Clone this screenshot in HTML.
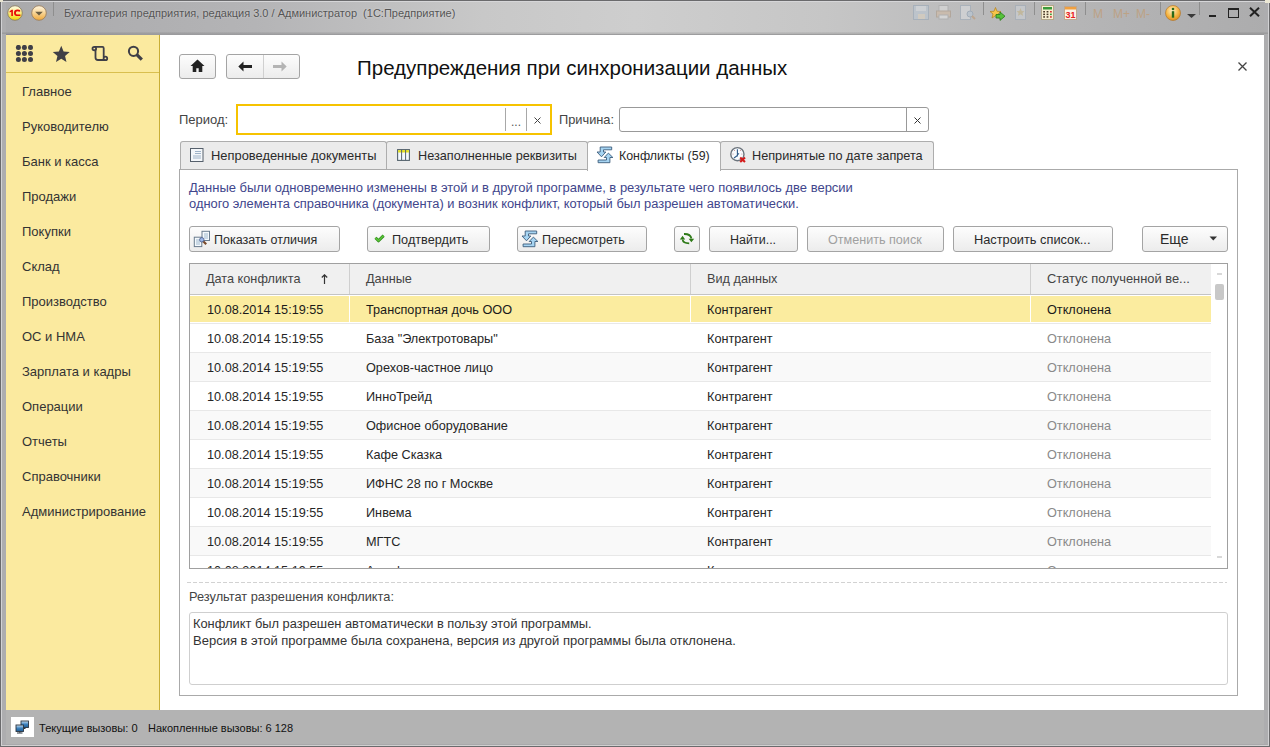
<!DOCTYPE html>
<html><head><meta charset="utf-8">
<style>
*{box-sizing:border-box;margin:0;padding:0}
html,body{width:1270px;height:747px;overflow:hidden;background:#b4b4b4;font-family:"Liberation Sans",sans-serif;}
.a{position:absolute}
.t{position:absolute;white-space:nowrap;line-height:1;}
#frame{left:0;top:0;width:1270px;height:747px;border:1px solid #6e6e70;}
#titlebar{left:1px;top:1px;width:1268px;height:33px;background:linear-gradient(to right,#a9a9ab 0%,#b4b4b6 20%,#c8c8c8 38%,#cecece 50%,#c6c6c6 65%,#b8b8b9 80%,#acacad 100%);}
#sidebar{left:6px;top:35px;width:154px;height:675px;background:#fbea9f;border-right:1px solid #c9ae36;}
#main{left:160px;top:35px;width:1104px;height:675px;background:#fff;}
#status{left:6px;top:710px;width:1258px;height:34px;background:#b3b3b3;}
.menu{left:22px;font-size:13px;color:#333;}
.btn{position:absolute;height:26px;border:1px solid #a4a4a4;border-radius:3px;background:linear-gradient(#fdfdfd,#ececec);}
.tab{position:absolute;top:141px;height:28px;border:1px solid #adadad;border-bottom:none;border-radius:3px 3px 0 0;background:#ebebeb;}
.bt{font-size:12.6px;color:#2a2a2a;}
.row{position:absolute;left:190px;width:1021px;height:29px;border-bottom:1px solid #e6e6e6;}
.cell{position:absolute;font-size:12.7px;color:#262626;top:9px;white-space:nowrap;line-height:1}
</style></head><body>
<div class="a" id="frame"></div>
<div class="a" id="titlebar"></div>
<div class="a" style="left:0;top:0;width:1270px;height:1px;background:#6a6a6c"></div>
<div class="a" style="left:1px;top:1px;width:1268px;height:1px;background:#d6d6d8"></div>
<div class="a" style="left:0;top:0;width:1px;height:747px;background:#6a6a6c"></div>
<div class="a" style="left:1px;top:1px;width:1px;height:745px;background:#d2d2d4"></div>
<div class="a" style="left:1269px;top:0;width:1px;height:747px;background:#6a6a6c"></div>
<div class="a" style="left:1268px;top:1px;width:1px;height:745px;background:#d2d2d4"></div>
<div class="a" style="left:2px;top:2px;width:4px;height:744px;background:#adadaf"></div>
<div class="a" style="left:1264px;top:2px;width:4px;height:744px;background:#adadaf"></div>
<div class="a" style="left:2px;top:32px;width:1266px;height:2px;background:linear-gradient(rgba(0,0,0,0.04),rgba(0,0,0,0.12))"></div>
<div class="a" style="left:6px;top:34px;width:1258px;height:1px;background:linear-gradient(to right,#8a8794,#9b9b9e 10%,#9e9e9e 90%,#98989a)"></div>

<!-- title bar content -->
<div class="a" style="left:0;top:0;width:3px;height:2px;background:#e8e4d0"></div>
<div class="a" style="left:1265px;top:0;width:5px;height:3px;background:#ece8d4"></div>
<svg class="a" style="left:7px;top:5px" width="16" height="16" viewBox="0 0 16 16"><defs><linearGradient id="lg1" x1="0" y1="0" x2="0" y2="1"><stop offset="0" stop-color="#fffbe8"/><stop offset="0.45" stop-color="#fbf08a"/><stop offset="1" stop-color="#f2d400"/></linearGradient></defs><circle cx="8" cy="8" r="7.3" fill="url(#lg1)" stroke="#8c7e62" stroke-width="0.9"/><path d="M2.6 6.2 L4.6 4.8 H5.9 V11 H4.3 V6.8 L2.6 7.6 Z" fill="#e80808"/><path d="M13.2 6.4 V5.2 Q12.4 4.6 10.6 4.6 Q7 4.6 7 7.9 Q7 11 10.6 11 H13.4 V9.4 H10.6 Q8.8 9.4 8.8 7.9 Q8.8 6.2 10.6 6.2 Q11.8 6.2 12 6.8 Z" fill="#e80808"/></svg>
<svg class="a" style="left:31px;top:5px" width="16" height="16" viewBox="0 0 16 16"><defs><linearGradient id="lg2" x1="0" y1="0" x2="0" y2="1"><stop offset="0" stop-color="#fff6e0"/><stop offset="0.5" stop-color="#f8d494"/><stop offset="1" stop-color="#f0a838"/></linearGradient></defs><circle cx="8" cy="8" r="7.3" fill="url(#lg2)" stroke="#9c8060" stroke-width="0.9"/><path d="M4.2 6.8 H11.8 L8 10.6 Z" fill="#6a5e44"/></svg>
<div class="a" style="left:53px;top:2px;width:1px;height:14px;background:#8e8e8e"></div>
<div class="t" style="left:64px;top:8px;font-size:11px;color:#555;text-shadow:0 0 2px rgba(255,255,255,0.5);">Бухгалтерия предприятия, редакция 3.0 / Администратор&nbsp; (1С:Предприятие)</div>


<!-- title bar right icons -->
<svg class="a" style="left:913px;top:5px" width="17" height="15" viewBox="0 0 17 15" opacity="0.35"><rect x="0.5" y="0.5" width="15" height="14" fill="#b8cde0" stroke="#7b95b0"/><rect x="3" y="1" width="10" height="5" fill="#e8f0f8"/><rect x="5" y="9" width="7" height="5" fill="#f0e0c0"/></svg>
<svg class="a" style="left:936px;top:5px" width="15" height="15" viewBox="0 0 15 15" opacity="0.35"><rect x="3" y="0.5" width="9" height="6" fill="#f4f4f4" stroke="#9a9a9a"/><rect x="0.5" y="6" width="14" height="6" fill="#e0b890" stroke="#a08060"/><rect x="3" y="10" width="9" height="4" fill="#fff" stroke="#9a9a9a"/></svg>
<svg class="a" style="left:960px;top:5px" width="16" height="15" viewBox="0 0 16 15" opacity="0.35"><rect x="0.5" y="0.5" width="10" height="14" fill="#f0f4f8" stroke="#8aa0b8"/><circle cx="10" cy="9" r="3" fill="#b8d0e8" stroke="#7090b0"/><path d="M12 11 L15 14" stroke="#c08040" stroke-width="2"/></svg>
<div class="a" style="left:983px;top:2px;width:1px;height:13px;background:#8e8e8e"></div>
<svg class="a" style="left:990px;top:7px" width="16" height="14" viewBox="0 0 16 14"><path d="M5.5 0.5 L7 4.3 L11 4.5 L8 7 L9 11 L5.5 8.7 L2 11 L3 7 L0 4.5 L4 4.3 Z" fill="#f6c54a" stroke="#b08020" stroke-width="0.7"/><path d="M6 7.5 H10 V5 L15 9.2 L10 13.4 V11 H6 Z" fill="#56c23a" stroke="#2a7a1a" stroke-width="0.8"/></svg>
<svg class="a" style="left:1015px;top:5px" width="11" height="15" viewBox="0 0 11 15" opacity="0.3"><rect x="0.5" y="0.5" width="10" height="14" fill="#e4ecf4" stroke="#8aa0b8"/><path d="M5.5 3 L6.7 6 L9.5 6.2 L7.4 8 L8.1 11 L5.5 9.3 L2.9 11 L3.6 8 L1.5 6.2 L4.3 6 Z" fill="#d8b860"/></svg>
<div class="a" style="left:1034px;top:2px;width:1px;height:13px;background:#8e8e8e"></div>
<svg class="a" style="left:1041px;top:5px" width="13" height="15" viewBox="0 0 13 15"><rect x="0.5" y="0.5" width="12" height="14" fill="#f8efd2" stroke="#b4a88a"/><rect x="2" y="2" width="9" height="2.5" fill="#3a9a3a"/><g fill="#4a3a2a"><rect x="2.2" y="6" width="1.8" height="1.5"/><rect x="5.6" y="6" width="1.8" height="1.5"/><rect x="2.2" y="8.6" width="1.8" height="1.5"/><rect x="5.6" y="8.6" width="1.8" height="1.5"/><rect x="2.2" y="11.2" width="1.8" height="1.5"/><rect x="5.6" y="11.2" width="1.8" height="1.5"/></g><g fill="#d83030"><rect x="9" y="6" width="1.8" height="1.5"/><rect x="9" y="11.2" width="1.8" height="1.5"/></g><rect x="9" y="8.6" width="1.8" height="1.5" fill="#3a9a3a"/></svg>
<svg class="a" style="left:1064px;top:5px" width="13" height="15" viewBox="0 0 13 15"><rect x="0.5" y="1.5" width="12" height="13" fill="#fbf3e6" stroke="#c0a890"/><rect x="1" y="2" width="11" height="2.5" fill="#f0a040"/><text x="1.6" y="13" font-family="Liberation Sans" font-size="9" font-weight="bold" fill="#e82020">31</text></svg>
<div class="a" style="left:1085px;top:2px;width:1px;height:13px;background:#8e8e8e"></div>
<div class="t" style="left:1093px;top:8px;font-size:12px;color:#bda285">M</div>
<div class="t" style="left:1113px;top:8px;font-size:12px;color:#bda285">M+</div>
<div class="t" style="left:1136px;top:8px;font-size:12px;color:#bda285">M-</div>
<div class="a" style="left:1160px;top:2px;width:1px;height:13px;background:#8e8e8e"></div>
<svg class="a" style="left:1165px;top:5px" width="16" height="16" viewBox="0 0 16 16"><defs><radialGradient id="ig" cx="0.45" cy="0.35" r="0.7"><stop offset="0" stop-color="#fff2c8"/><stop offset="0.6" stop-color="#f6b440"/><stop offset="1" stop-color="#d88a20"/></radialGradient></defs><circle cx="8" cy="8" r="7.5" fill="url(#ig)" stroke="#b07020" stroke-width="0.6"/><circle cx="8" cy="4" r="1.3" fill="#2a6a1a"/><rect x="6.8" y="6.2" width="2.4" height="6.5" fill="#2a6a1a"/></svg>
<svg class="a" style="left:1187px;top:14px" width="9" height="4" viewBox="0 0 9 4"><path d="M0 0 H9 L4.5 4 Z" fill="#3a3a3a"/></svg>
<div class="a" style="left:1199px;top:2px;width:1px;height:13px;background:#8e8e8e"></div>
<div class="a" style="left:1209px;top:15px;width:7px;height:2px;background:#222"></div>
<div class="a" style="left:1228px;top:8px;width:11px;height:10px;border:1px solid #222;border-top-width:2px"></div>
<svg class="a" style="left:1249px;top:7px" width="11" height="10" viewBox="0 0 11 10"><path d="M1 0.8 L10 9.2 M10 0.8 L1 9.2" stroke="#222" stroke-width="2"/></svg>

<!-- sidebar -->
<div class="a" id="sidebar"></div>
<div class="a" style="left:6px;top:72px;width:153px;height:1px;background:#d9bf4f"></div>
<svg class="a" style="left:15px;top:45px" width="18" height="18" viewBox="0 0 18 18" fill="#3f3f47"><circle cx="3.4" cy="2.4" r="2.5"/><circle cx="9.4" cy="2.4" r="2.5"/><circle cx="15.5" cy="2.4" r="2.5"/><circle cx="3.4" cy="8.5" r="2.5"/><circle cx="9.4" cy="8.5" r="2.5"/><circle cx="15.5" cy="8.5" r="2.5"/><circle cx="3.4" cy="14.6" r="2.5"/><circle cx="9.4" cy="14.6" r="2.5"/><circle cx="15.5" cy="14.6" r="2.5"/></svg>
<svg class="a" style="left:52px;top:45px" width="19" height="18" viewBox="0 0 19 18"><path d="M9.25 0.80 L11.60 6.46 L17.71 6.95 L13.05 10.94 L14.48 16.90 L9.25 13.70 L4.02 16.90 L5.45 10.94 L0.79 6.95 L6.90 6.46 Z" fill="#404046"/></svg>
<svg class="a" style="left:91px;top:45px" width="18" height="17" viewBox="0 0 18 17" fill="none" stroke="#3f3f47" stroke-width="1.8"><path d="M4.5 4 V12.5 Q4.5 15 7 15 H14.5"/><path d="M3.5 1.8 H11.5 Q12.7 1.8 12.7 3.2 V12.3"/><circle cx="3.3" cy="3.6" r="1.8"/><circle cx="14.4" cy="13.4" r="1.8"/></svg>
<svg class="a" style="left:126px;top:45px" width="18" height="17" viewBox="0 0 18 17"><circle cx="7.5" cy="6.3" r="4.6" fill="none" stroke="#3f3f47" stroke-width="2"/><path d="M10.8 9.6 L15.8 14.6" stroke="#3f3f47" stroke-width="3.2"/></svg>
<div class="t menu" style="top:85px">Главное</div>
<div class="t menu" style="top:120px">Руководителю</div>
<div class="t menu" style="top:155px">Банк и касса</div>
<div class="t menu" style="top:190px">Продажи</div>
<div class="t menu" style="top:225px">Покупки</div>
<div class="t menu" style="top:260px">Склад</div>
<div class="t menu" style="top:295px">Производство</div>
<div class="t menu" style="top:330px">ОС и НМА</div>
<div class="t menu" style="top:365px">Зарплата и кадры</div>
<div class="t menu" style="top:400px">Операции</div>
<div class="t menu" style="top:435px">Отчеты</div>
<div class="t menu" style="top:470px">Справочники</div>
<div class="t menu" style="top:505px">Администрирование</div>

<!-- main -->
<div class="a" id="main"></div>
<!-- nav buttons -->
<div class="btn" style="left:179px;top:54px;width:37px;height:25px;"></div>
<svg class="a" style="left:190px;top:59px" width="15" height="14" viewBox="0 0 15 14"><path d="M7.5 0.5 L14.5 7 H12.3 V13 H8.7 V9.3 H6.3 V13 H2.7 V7 H0.5 Z" fill="#222"/></svg>
<div class="btn" style="left:226px;top:54px;width:74px;height:25px;"></div>
<div class="a" style="left:263px;top:55px;width:1px;height:23px;background:#d0d0d0"></div>
<svg class="a" style="left:238px;top:61px" width="15" height="12" viewBox="0 0 15 12"><path d="M0.3 5.5 L5.5 0.5 V4 H14 V7 H5.5 V10.6 Z" fill="#222"/></svg>
<svg class="a" style="left:272px;top:61px" width="15" height="12" viewBox="0 0 15 12"><path d="M14.7 5.5 L9.5 0.5 V4 H1 V7 H9.5 V10.6 Z" fill="#b4b4b4"/></svg>
<div class="t" style="left:357px;top:57.5px;font-size:20.5px;color:#111;">Предупреждения при синхронизации данных</div>
<svg class="a" style="left:1238px;top:62px" width="9" height="9" viewBox="0 0 9 9"><path d="M0.5 0.5 L8.5 8.5 M8.5 0.5 L0.5 8.5" stroke="#444" stroke-width="1.3"/></svg>

<!-- period -->
<div class="t" style="left:179px;top:113px;font-size:13px;color:#444">Период:</div>
<div class="a" style="left:236px;top:104px;width:316px;height:31px;border:2px solid #f6c300;background:#fff"></div>
<div class="a" style="left:505px;top:108px;width:1px;height:23px;background:#a8a8a8"></div>
<div class="a" style="left:526px;top:108px;width:1px;height:23px;background:#a8a8a8"></div>
<div class="t" style="left:511px;top:116px;font-size:12px;color:#555">...</div>
<svg class="a" style="left:534px;top:117px" width="7" height="7" viewBox="0 0 7 7"><path d="M0.5 0.5 L6.5 6.5 M6.5 0.5 L0.5 6.5" stroke="#444" stroke-width="1"/></svg>
<div class="t" style="left:559px;top:114px;font-size:12.8px;color:#444">Причина:</div>
<div class="a" style="left:619px;top:107px;width:310px;height:25px;border:1px solid #999;border-radius:3px;background:#fff"></div>
<div class="a" style="left:906px;top:108px;width:1px;height:23px;background:#999"></div>
<svg class="a" style="left:914px;top:117px" width="7" height="7" viewBox="0 0 7 7"><path d="M0.5 0.5 L6.5 6.5 M6.5 0.5 L0.5 6.5" stroke="#333" stroke-width="1"/></svg>

<!-- tabs -->
<div class="a" style="left:179px;top:169px;width:1059px;height:527px;border:1px solid #aaaaaa;background:#fff"></div>
<div class="tab" style="left:180px;width:207px"></div>
<div class="tab" style="left:386px;width:202px"></div>
<div class="tab" style="left:587px;width:134px;height:30px;background:#fff"></div>
<div class="tab" style="left:720px;width:214px"></div>
<svg class="a" style="left:190px;top:148px" width="14" height="14" viewBox="0 0 14 14"><rect x="0.5" y="0.5" width="12.5" height="13" fill="#f4f7fa" stroke="#56606c"/><path d="M5 3.5h6M5 5.5h6M3 8h8M3 10h8" stroke="#9fb3c8" stroke-width="1"/></svg>
<div class="t bt" style="left:211px;top:150px;font-size:12.9px">Непроведенные документы</div>
<svg class="a" style="left:397px;top:149px" width="13" height="12" viewBox="0 0 13 12"><rect x="0.6" y="0.6" width="11.8" height="10.8" fill="#f4faff" stroke="#56646e" stroke-width="1.1"/><rect x="1.1" y="1.1" width="10.8" height="2.4" fill="#e4e020"/><path d="M4.6 0.6v10.8M8.6 0.6v10.8" stroke="#56646e" stroke-width="1"/></svg>
<div class="t bt" style="left:418px;top:150px;font-size:12.7px">Незаполненные реквизиты</div>
<svg class="a" style="left:596px;top:145px" width="18" height="19" viewBox="0 0 18 19"><path d="M15.7 2 H4.2 V7 H1 L5.5 11.8 L9.8 7 H7.5 V4.8 H15.7 Z" fill="#a6d4f2" stroke="#3c5c7a" stroke-width="0.9" stroke-linejoin="round"/><path d="M2.1 17.7 H13.9 V12.5 H16.9 L12.4 8.1 L8.2 12.5 H10.5 V15 H2.1 Z" fill="#a6d4f2" stroke="#3c5c7a" stroke-width="0.9" stroke-linejoin="round"/></svg>
<div class="t bt" style="left:619px;top:150px;font-size:12.4px">Конфликты (59)</div>
<svg class="a" style="left:729px;top:146px" width="18" height="18" viewBox="0 0 18 18"><circle cx="8.4" cy="8.2" r="6.6" fill="#f8fbfe" stroke="#6c747c" stroke-width="1.4"/><path d="M8.4 3.2 V10.4 M8.4 8.8 L10 7.4 M8.4 9.5 L5 12" stroke="#2e5a88" stroke-width="1.1" fill="none"/><g fill="#c08080"><circle cx="5.5" cy="4.5" r="0.5"/><circle cx="11.4" cy="4.5" r="0.5"/><circle cx="4" cy="8" r="0.5"/><circle cx="12.9" cy="8" r="0.5"/></g><path d="M11.2 11.4 L16 16 M16 11.4 L11.2 16" stroke="#d41a1a" stroke-width="2.1"/></svg>
<div class="t bt" style="left:752px;top:150px;font-size:12.7px">Непринятые по дате запрета</div>

<!-- info -->
<div class="t" style="left:189px;top:181px;font-size:13px;color:#41468c">Данные были одновременно изменены в этой и в другой программе, в результате чего появилось две версии</div>
<div class="t" style="left:189px;top:198px;font-size:12.89px;color:#41468c">одного элемента справочника (документа) и возник конфликт, который был разрешен автоматически.</div>

<!-- toolbar -->
<div class="btn" style="left:189px;top:226px;width:151px"></div>
<svg class="a" style="left:193px;top:230px" width="18" height="18" viewBox="0 0 18 18"><rect x="9" y="1.3" width="7.5" height="9.2" fill="#f4f9fd" stroke="#6a7c8e" stroke-width="1"/><path d="M11 4h4M11 6h4M11 8h4" stroke="#8aa8c0" stroke-width="0.8"/><rect x="1.3" y="7.2" width="7.5" height="9.4" fill="#f4f9fd" stroke="#6a7c8e" stroke-width="1"/><path d="M3 10h4M3 12h4M3 14h4" stroke="#8aa8c0" stroke-width="0.8"/><path d="M9.5 10.5 L13.2 14.2" stroke="#7a4a2a" stroke-width="2.2"/><circle cx="8.8" cy="9.8" r="2.2" fill="#9cb8e8" stroke="#4a5a8a" stroke-width="0.8"/></svg>
<div class="t bt" style="left:214px;top:233.5px;font-size:12.5px">Показать отличия</div>
<div class="btn" style="left:367px;top:226px;width:123px"></div>
<svg class="a" style="left:374px;top:234px" width="11" height="9" viewBox="0 0 11 9"><path d="M1.5 3.8 L4.5 6.8 L9.6 1.6" stroke="#2f8a1c" stroke-width="3" fill="none" stroke-linejoin="round"/><path d="M1.5 3.8 L4.5 6.8 L9.6 1.6" stroke="#5cc83a" stroke-width="1.4" fill="none" stroke-linejoin="round"/></svg>
<div class="t bt" style="left:392px;top:233.5px;font-size:12.7px">Подтвердить</div>
<div class="btn" style="left:517px;top:226px;width:130px"></div>
<svg class="a" style="left:521px;top:229px" width="18" height="19" viewBox="0 0 18 19"><path d="M15.7 2 H4.2 V7 H1 L5.5 11.8 L9.8 7 H7.5 V4.8 H15.7 Z" fill="#a6d4f2" stroke="#3c5c7a" stroke-width="0.9" stroke-linejoin="round"/><path d="M2.1 17.7 H13.9 V12.5 H16.9 L12.4 8.1 L8.2 12.5 H10.5 V15 H2.1 Z" fill="#a6d4f2" stroke="#3c5c7a" stroke-width="0.9" stroke-linejoin="round"/></svg>
<div class="t bt" style="left:542px;top:233.5px;font-size:12.5px">Пересмотреть</div>
<div class="btn" style="left:674px;top:226px;width:26px"></div>
<svg class="a" style="left:679px;top:232px" width="16" height="13" viewBox="0 0 16 13"><path d="M3.6 7.5 Q4 11.3 10.2 11.3" stroke="#2e7a18" stroke-width="1.8" fill="none"/><path d="M0.8 7.6 L3.6 3.8 L6.2 7.6 Z" fill="#2e7a18"/><path d="M5 2 Q11.5 1.8 12.4 6.5" stroke="#2e7a18" stroke-width="1.8" fill="none"/><path d="M9.6 6.8 L12.4 10.2 L15.2 6.8 Z" fill="#2e7a18"/></svg>
<div class="btn" style="left:709px;top:226px;width:89px"></div>
<div class="t bt" style="left:730px;top:233.5px;font-size:12.5px">Найти...</div>
<div class="btn" style="left:807px;top:226px;width:137px"></div>
<div class="t bt" style="left:828px;top:233.5px;font-size:12.6px;color:#a0a0a0">Отменить поиск</div>
<div class="btn" style="left:953px;top:226px;width:160px"></div>
<div class="t bt" style="left:974px;top:233.5px;font-size:12.8px">Настроить список...</div>
<div class="btn" style="left:1142px;top:226px;width:86px"></div>
<div class="t bt" style="left:1160px;top:232px;font-size:14px">Еще</div>
<svg class="a" style="left:1209px;top:236px" width="9" height="5" viewBox="0 0 9 5"><path d="M0.5 0.5 H8 L4.25 4.5 Z" fill="#333"/></svg>

<!-- table -->
<div class="a" style="left:189px;top:263px;width:1039px;height:306px;border:1px solid #a0a0a0;background:#fff;overflow:hidden">
</div>
<div class="a" style="left:190px;top:264px;width:1021px;height:30px;background:#f0f0f0"></div>
<div class="a" style="left:190px;top:294px;width:1021px;height:1px;background:#c4c4c4"></div>
<div class="a" style="left:349px;top:264px;width:1px;height:30px;background:#cfcfcf"></div>
<div class="a" style="left:690px;top:264px;width:1px;height:30px;background:#cfcfcf"></div>
<div class="a" style="left:1030px;top:264px;width:1px;height:30px;background:#cfcfcf"></div>
<div class="t" style="left:206px;top:273px;font-size:12.7px;color:#444">Дата конфликта</div>
<svg class="a" style="left:321px;top:274px" width="7" height="10" viewBox="0 0 7 10"><path d="M3.5 1 V10 M0.8 3.5 L3.5 0.8 L6.2 3.5" stroke="#333" stroke-width="1.2" fill="none"/></svg>
<div class="t" style="left:366px;top:273px;font-size:12.7px;color:#444">Данные</div>
<div class="t" style="left:707px;top:273px;font-size:12.7px;color:#444">Вид данных</div>
<div class="t" style="left:1047px;top:273px;font-size:12.9px;color:#444">Статус полученной ве...</div>
<div id="rows"></div>
<div class="a" style="left:190px;top:296px;width:1021px;height:26px;background:#fbec9f"></div>
<div class="a" style="left:190px;top:323px;width:1021px;height:1px;background:#e8e8e8"></div>
<div class="a" style="left:349px;top:295px;width:1px;height:28px;background:#fff"></div>
<div class="a" style="left:690px;top:295px;width:1px;height:28px;background:#fff"></div>
<div class="a" style="left:1030px;top:295px;width:1px;height:28px;background:#fff"></div>
<div class="t cell" style="left:207px;top:304px;color:#1a1a1a">10.08.2014 15:19:55</div>
<div class="t cell" style="left:366px;top:304px;color:#1a1a1a">Транспортная дочь ООО</div>
<div class="t cell" style="left:707px;top:304px;color:#1a1a1a">Контрагент</div>
<div class="t cell" style="left:1047px;top:304px;color:#1a1a1a">Отклонена</div>
<div class="a" style="left:190px;top:324px;width:1021px;height:28px;background:#ffffff"></div>
<div class="a" style="left:190px;top:352px;width:1021px;height:1px;background:#e8e8e8"></div>
<div class="t cell" style="left:207px;top:333px;color:#262626">10.08.2014 15:19:55</div>
<div class="t cell" style="left:366px;top:333px;color:#262626">База &quot;Электротовары&quot;</div>
<div class="t cell" style="left:707px;top:333px;color:#262626">Контрагент</div>
<div class="t cell" style="left:1047px;top:333px;color:#8a8a8a">Отклонена</div>
<div class="a" style="left:190px;top:353px;width:1021px;height:28px;background:#f9f9f9"></div>
<div class="a" style="left:190px;top:381px;width:1021px;height:1px;background:#e8e8e8"></div>
<div class="t cell" style="left:207px;top:362px;color:#262626">10.08.2014 15:19:55</div>
<div class="t cell" style="left:366px;top:362px;color:#262626">Орехов-частное лицо</div>
<div class="t cell" style="left:707px;top:362px;color:#262626">Контрагент</div>
<div class="t cell" style="left:1047px;top:362px;color:#8a8a8a">Отклонена</div>
<div class="a" style="left:190px;top:382px;width:1021px;height:28px;background:#ffffff"></div>
<div class="a" style="left:190px;top:410px;width:1021px;height:1px;background:#e8e8e8"></div>
<div class="t cell" style="left:207px;top:391px;color:#262626">10.08.2014 15:19:55</div>
<div class="t cell" style="left:366px;top:391px;color:#262626">ИнноТрейд</div>
<div class="t cell" style="left:707px;top:391px;color:#262626">Контрагент</div>
<div class="t cell" style="left:1047px;top:391px;color:#8a8a8a">Отклонена</div>
<div class="a" style="left:190px;top:411px;width:1021px;height:28px;background:#f9f9f9"></div>
<div class="a" style="left:190px;top:439px;width:1021px;height:1px;background:#e8e8e8"></div>
<div class="t cell" style="left:207px;top:420px;color:#262626">10.08.2014 15:19:55</div>
<div class="t cell" style="left:366px;top:420px;color:#262626">Офисное оборудование</div>
<div class="t cell" style="left:707px;top:420px;color:#262626">Контрагент</div>
<div class="t cell" style="left:1047px;top:420px;color:#8a8a8a">Отклонена</div>
<div class="a" style="left:190px;top:440px;width:1021px;height:28px;background:#ffffff"></div>
<div class="a" style="left:190px;top:468px;width:1021px;height:1px;background:#e8e8e8"></div>
<div class="t cell" style="left:207px;top:449px;color:#262626">10.08.2014 15:19:55</div>
<div class="t cell" style="left:366px;top:449px;color:#262626">Кафе Сказка</div>
<div class="t cell" style="left:707px;top:449px;color:#262626">Контрагент</div>
<div class="t cell" style="left:1047px;top:449px;color:#8a8a8a">Отклонена</div>
<div class="a" style="left:190px;top:469px;width:1021px;height:28px;background:#f9f9f9"></div>
<div class="a" style="left:190px;top:497px;width:1021px;height:1px;background:#e8e8e8"></div>
<div class="t cell" style="left:207px;top:478px;color:#262626">10.08.2014 15:19:55</div>
<div class="t cell" style="left:366px;top:478px;color:#262626">ИФНС 28 по г Москве</div>
<div class="t cell" style="left:707px;top:478px;color:#262626">Контрагент</div>
<div class="t cell" style="left:1047px;top:478px;color:#8a8a8a">Отклонена</div>
<div class="a" style="left:190px;top:498px;width:1021px;height:28px;background:#ffffff"></div>
<div class="a" style="left:190px;top:526px;width:1021px;height:1px;background:#e8e8e8"></div>
<div class="t cell" style="left:207px;top:507px;color:#262626">10.08.2014 15:19:55</div>
<div class="t cell" style="left:366px;top:507px;color:#262626">Инвема</div>
<div class="t cell" style="left:707px;top:507px;color:#262626">Контрагент</div>
<div class="t cell" style="left:1047px;top:507px;color:#8a8a8a">Отклонена</div>
<div class="a" style="left:190px;top:527px;width:1021px;height:28px;background:#f9f9f9"></div>
<div class="a" style="left:190px;top:555px;width:1021px;height:1px;background:#e8e8e8"></div>
<div class="t cell" style="left:207px;top:536px;color:#262626">10.08.2014 15:19:55</div>
<div class="t cell" style="left:366px;top:536px;color:#262626">МГТС</div>
<div class="t cell" style="left:707px;top:536px;color:#262626">Контрагент</div>
<div class="t cell" style="left:1047px;top:536px;color:#8a8a8a">Отклонена</div>
<div class="a" style="left:190px;top:556px;width:1021px;height:12px;background:#ffffff"></div>
<div class="t cell" style="left:207px;top:565px;color:#262626">10.08.2014 15:19:55</div>
<div class="t cell" style="left:366px;top:565px;color:#262626">Агрофирма</div>
<div class="t cell" style="left:707px;top:565px;color:#262626">Контрагент</div>
<div class="t cell" style="left:1047px;top:565px;color:#8a8a8a">Отклонена</div>
<div class="a" style="left:189px;top:568px;width:1039px;height:1px;background:#a0a0a0"></div>
<div class="a" style="left:180px;top:569px;width:1057px;height:12px;background:#fff"></div>
<div class="a" style="left:1215px;top:284px;width:9px;height:16px;background:#c8c8c8;border-radius:2px"></div>
<div class="a" style="left:1217px;top:273px;width:5px;height:2px;background:#d8d8d8"></div>
<div class="a" style="left:1217px;top:556px;width:5px;height:2px;background:#d8d8d8"></div>

<!-- result -->
<div class="a" style="left:187px;top:582px;width:1040px;height:1px;background-image:linear-gradient(to right,#d2d2d2 4px,transparent 4px);background-size:6px 1px"></div>
<div class="t" style="left:189px;top:591px;font-size:12.8px;color:#444">Результат разрешения конфликта:</div>
<div class="a" style="left:189px;top:612px;width:1039px;height:73px;border:1px solid #cfcfcf;border-radius:3px;background:#fff"></div>
<div class="t" style="left:193px;top:618px;font-size:12.85px;color:#333">Конфликт был разрешен автоматически в пользу этой программы.</div>
<div class="t" style="left:193px;top:634px;font-size:13px;color:#333">Версия в этой программе была сохранена, версия из другой программы была отклонена.</div>

<!-- status bar -->
<div class="a" id="status"></div>
<div class="a" style="left:2px;top:744px;width:1266px;height:1px;background:#a9a9ab"></div>
<div class="a" style="left:1px;top:745px;width:1268px;height:1px;background:#d0d0d0"></div>
<div class="a" style="left:0;top:746px;width:1270px;height:1px;background:#6a6a6c"></div>
<div class="a" style="left:11px;top:717px;width:23px;height:20px;background:#fff"></div>
<svg class="a" style="left:15px;top:720px" width="15" height="15" viewBox="0 0 15 15"><defs><linearGradient id="sg" x1="0" y1="0" x2="0" y2="1"><stop offset="0" stop-color="#cfe4f4"/><stop offset="0.5" stop-color="#3d82be"/><stop offset="1" stop-color="#1e5a90"/></linearGradient></defs><rect x="6" y="1" width="7.5" height="6.5" fill="url(#sg)" stroke="#2a3440" stroke-width="0.9"/><rect x="9" y="7.5" width="1.5" height="1.5" fill="#2a3440"/><rect x="1" y="5" width="7.5" height="6.5" fill="url(#sg)" stroke="#2a3440" stroke-width="0.9"/><rect x="4" y="11.5" width="1.5" height="1" fill="#2a3440"/><rect x="2" y="12.5" width="5.5" height="1" fill="#2a3440"/></svg>
<div class="t" style="left:39px;top:723px;font-size:11.1px;color:#111">Текущие вызовы: 0</div>
<div class="t" style="left:148px;top:723px;font-size:11px;color:#111">Накопленные вызовы: 6 128</div>
</body></html>
